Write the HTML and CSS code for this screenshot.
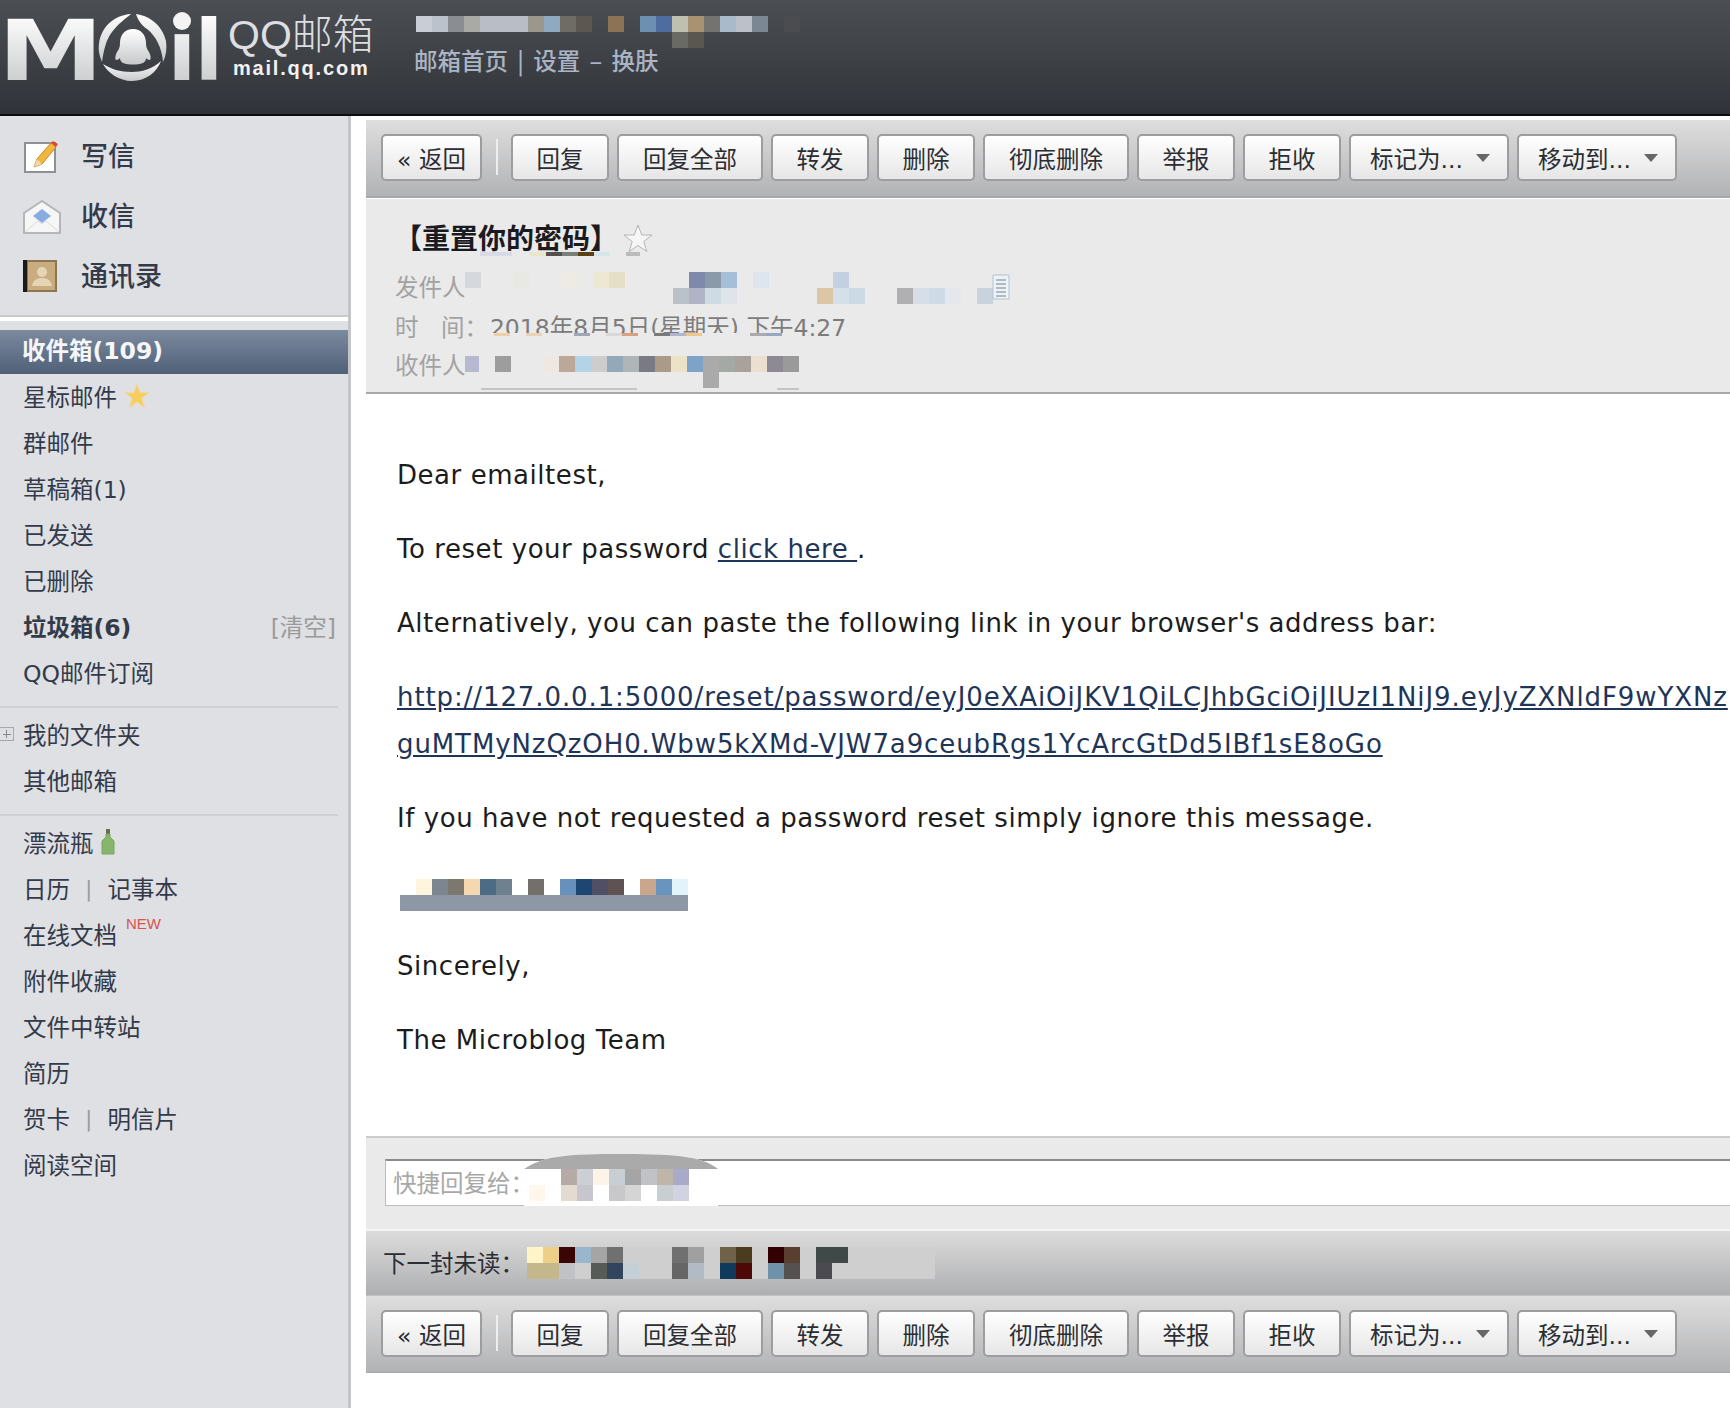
FILE: index.html
```html
<!DOCTYPE html>
<html lang="zh-CN">
<head>
    <meta charset="UTF-8">
    <title>QQ邮箱</title>
    <link rel="stylesheet" href="styles.css">
</head>
<body>

    <header class="topbar">
        <div class="logo">
            <span class="logo-letter logo-m">M</span>
            <svg class="logo-o" width="70" height="68" viewBox="0 0 70 68">
                <defs>
                    <linearGradient id="logoFill" x1="0" y1="0" x2="0" y2="1">
                        <stop offset="0" stop-color="#ffffff"/>
                        <stop offset="1" stop-color="#c6c8ca"/>
                    </linearGradient>
                </defs>
                <path d="M33 1C16 2 3 14 1 31c-1 7 1 13 3 18 2-13 4-22 10-30C20 11 27 6 33 1z" fill="url(#logoFill)"/>
                <path d="M38 1c15 2 27 13 30 27 1 8 0 15-3 21-1-14-7-26-16-33-6-4-9-9-11-15z" fill="url(#logoFill)"/>
                <path d="M5 51c8 5 17 8 29 8 9 0 21-3 29-11-4 11-15 20-29 20-13 0-24-8-29-17z" fill="url(#logoFill)"/>
                <path d="M35 16c8 0 13 6 13 14 0 4 1 6 3 9 2 4 2 7 1 8-2 0-3-1-4-2 0 2-1 4-3 5-6 2-14 2-20 0-2-1-3-3-3-5-1 1-2 2-4 2-1-1-1-4 1-8 2-3 3-5 3-9 0-8 5-14 13-14z" fill="url(#logoFill)"/>
            </svg>
            <span class="logo-letter logo-i">ı</span>
            <span class="logo-letter logo-l">l</span>
        </div>
        <div class="brand">
            <div class="brand-name">QQ邮箱</div>
            <div class="brand-url">mail.qq.com</div>
        </div>
        <div class="account">
            <svg class="mosaic account-mosaic" width="384" height="32" viewBox="0 0 384 32">
                <rect x="0" width="16" height="16" fill="#c9ced6"/>
                <rect x="16" width="16" height="16" fill="#bcc2cb"/>
                <rect x="32" width="16" height="16" fill="#8a8e93"/>
                <rect x="48" width="16" height="16" fill="#a9a9a5"/>
                <rect x="64" width="48" height="16" fill="#b9bec6"/>
                <rect x="112" width="16" height="16" fill="#9c978c"/>
                <rect x="128" width="16" height="16" fill="#8fa9c0"/>
                <rect x="144" width="16" height="16" fill="#6f6c66"/>
                <rect x="160" width="16" height="16" fill="#5c5750"/>
                <rect x="192" width="16" height="16" fill="#8d7355"/>
                <rect x="224" width="16" height="16" fill="#6d8fb2"/>
                <rect x="240" width="16" height="16" fill="#4f6ca0"/>
                <rect x="256" width="16" height="16" fill="#c0c0b0"/>
                <rect x="272" width="16" height="16" fill="#a89272"/>
                <rect x="288" width="16" height="16" fill="#74736f"/>
                <rect x="304" width="16" height="16" fill="#a9bacb"/>
                <rect x="320" width="16" height="16" fill="#bcc0c8"/>
                <rect x="336" width="16" height="16" fill="#7b8894"/>
                <rect x="368" width="16" height="16" fill="#4a4c50"/>
                <rect x="256" y="16" width="16" height="16" fill="#6a6a64"/>
                <rect x="272" y="16" width="16" height="16" fill="#5a5650"/>
            </svg>
            <div class="account-links">邮箱首页 | 设置 – 换肤</div>
        </div>
    </header>

    <div class="layout">
        <aside class="sidebar">
            <nav class="quick-nav">
                <a class="quick-item">
                    <svg class="quick-icon" width="36" height="34" viewBox="0 0 36 34">
                        <rect x="2" y="3" width="30" height="29" fill="#ffffff" stroke="#8f9092" stroke-width="2"/>
                        <path d="M11 27l3-8L28 3l5 4-14 17z" fill="#f2b63c" stroke="#c8872a"/>
                        <path d="M28 3l2-2 5 3-2 3z" fill="#d9483a"/>
                        <path d="M11 27l3-8 5 5z" fill="#f0d6a8"/>
                    </svg>
                    写信
                </a>
                <a class="quick-item">
                    <svg class="quick-icon" width="38" height="34" viewBox="0 0 38 34">
                        <path d="M1 13L19 1l18 12v20H1z" fill="#f6f6f7" stroke="#b4b6ba" stroke-width="2"/>
                        <path d="M19 9l9 7-9 7-9-7z" fill="#8aabdf"/>
                        <path d="M2 32l13-11 4 3 4-3 13 11" fill="none" stroke="#d8dade"/>
                    </svg>
                    收信
                </a>
                <a class="quick-item">
                    <svg class="quick-icon" width="34" height="32" viewBox="0 0 34 32">
                        <rect x="0" y="0" width="34" height="32" fill="#8e7650"/>
                        <rect x="0" y="0" width="4" height="32" fill="#1c1a16"/>
                        <rect x="5" y="2" width="27" height="28" fill="#c9ad80"/>
                        <circle cx="19" cy="12" r="5" fill="#e6d5b4"/>
                        <path d="M9 26c1-6 5-8 10-8s9 2 10 8z" fill="#e6d5b4"/>
                    </svg>
                    通讯录
                </a>
            </nav>
            <div class="folder-selected">收件箱(109)</div>
            <ul class="folders">
                <li>星标邮件
                    <svg class="row-icon" width="26" height="26" viewBox="0 0 24 24">
                        <path d="M12 1l3 8h8l-6.500 5 2.500 9-7-5.500L5 23l2.500-9L1 9h8z" fill="#f7cd5c" stroke="#ecd9a8"/>
                    </svg>
                </li>
                <li>群邮件</li>
                <li>草稿箱(1)</li>
                <li>已发送</li>
                <li>已删除</li>
                <li class="folder-strong">垃圾箱(6)<span class="clear-link">[清空]</span></li>
                <li>QQ邮件订阅</li>
            </ul>
            <ul class="folders folders-split">
                <li class="has-tree"><span class="tree-plus"></span>我的文件夹</li>
                <li>其他邮箱</li>
            </ul>
            <ul class="folders folders-split">
                <li>漂流瓶
                    <svg class="row-icon" width="14" height="26" viewBox="0 0 14 26">
                        <rect x="5" y="0" width="4" height="6" fill="#6d6a4e"/>
                        <path d="M5 5h4l0 3 4 4v13H1V12l4-4z" fill="#86b56c" stroke="#7ba563"/>
                    </svg>
                </li>
                <li>日历<span class="pipe">|</span>记事本</li>
                <li>在线文档<sup class="new-tag">NEW</sup></li>
                <li>附件收藏</li>
                <li>文件中转站</li>
                <li>简历</li>
                <li>贺卡<span class="pipe">|</span>明信片</li>
                <li>阅读空间</li>
            </ul>
        </aside>

        <main class="content">
            <div class="toolbar">
                <button class="btn btn-back">« 返回</button>
                <span class="toolbar-sep"></span>
                <button class="btn btn-sm">回复</button>
                <button class="btn btn-md">回复全部</button>
                <button class="btn btn-sm">转发</button>
                <button class="btn btn-sm">删除</button>
                <button class="btn btn-md">彻底删除</button>
                <button class="btn btn-sm">举报</button>
                <button class="btn btn-sm">拒收</button>
                <button class="btn btn-lg">标记为...<span class="caret"></span></button>
                <button class="btn btn-lg">移动到...<span class="caret"></span></button>
            </div>

            <section class="msg-head">
                <div class="subject">
                    <h2>【重置你的密码】</h2>
                    <svg class="subject-star" width="32" height="30" viewBox="0 0 32 30">
                        <path d="M16 2l3.800 10H30l-8.200 6.500 3 10L16 22.500 7.200 28.500l3-10L2 12h10.200z" fill="#f6f6f6" stroke="#b5b5b5"/>
                    </svg>
                    <svg class="subject-smudge" width="160" height="4" viewBox="0 0 160 4">
                        <rect x="0" width="32" height="4" fill="#d8dbe6"/>
                        <rect x="50" width="16" height="4" fill="#e9e6cc"/>
                        <rect x="66" width="16" height="4" fill="#56504c"/>
                        <rect x="82" width="16" height="4" fill="#7b7f7c"/>
                        <rect x="98" width="16" height="4" fill="#5b4114"/>
                        <rect x="114" width="16" height="4" fill="#d4e6ec"/>
                        <rect x="146" width="14" height="4" fill="#bcbcbc"/>
                    </svg>
                </div>
                <div class="meta-row">
                    <span class="meta-label">发件人</span>
                    <svg class="mosaic" width="528" height="32" viewBox="0 0 528 32">
                        <rect x="0" width="16" height="16" fill="#d5d9dd"/>
                        <rect x="48" width="16" height="16" fill="#e9e9e4"/>
                        <rect x="96" width="16" height="16" fill="#eeebe4"/>
                        <rect x="128" width="16" height="16" fill="#ece8d4"/>
                        <rect x="144" width="16" height="16" fill="#e5dfc8"/>
                        <rect x="224" width="16" height="16" fill="#7f8aab"/>
                        <rect x="240" width="16" height="16" fill="#8b9aa8"/>
                        <rect x="256" width="16" height="16" fill="#a6bfd8"/>
                        <rect x="288" width="16" height="16" fill="#dde6ee"/>
                        <rect x="368" width="16" height="16" fill="#c3d0df"/>
                        <rect x="208" y="16" width="16" height="16" fill="#b9c1c9"/>
                        <rect x="224" y="16" width="16" height="16" fill="#b0b4c6"/>
                        <rect x="240" y="16" width="16" height="16" fill="#cfdbe4"/>
                        <rect x="256" y="16" width="16" height="16" fill="#dfe4ea"/>
                        <rect x="352" y="16" width="16" height="16" fill="#dcc6a4"/>
                        <rect x="368" y="16" width="16" height="16" fill="#d5dfe8"/>
                        <rect x="384" y="16" width="16" height="16" fill="#ccdae5"/>
                        <rect x="432" y="16" width="16" height="16" fill="#b0b0b2"/>
                        <rect x="448" y="16" width="16" height="16" fill="#d6dfe8"/>
                        <rect x="464" y="16" width="16" height="16" fill="#cedae5"/>
                        <rect x="480" y="16" width="16" height="16" fill="#e4e7ec"/>
                        <rect x="512" y="16" width="16" height="16" fill="#c9d3dd"/>
                    </svg>
                    <svg class="note-icon" width="18" height="26" viewBox="0 0 18 26">
                        <path d="M1 1h16v24H1z" fill="#eef1f5" stroke="#b4c2d2"/>
                        <path d="M4 6h10M4 10h10M4 14h10M4 18h10M4 22h10" stroke="#9aa8b8" stroke-width="1.500"/>
                    </svg>
                </div>
                <div class="meta-row">
                    <span class="meta-label">时&nbsp;&nbsp;&nbsp;间：</span><span class="meta-time">2018年8月5日(星期天) 下午4:27</span>
                    <svg class="time-smudge" width="310" height="14" viewBox="0 0 310 14">
                        <rect width="310" height="14" fill="#eaeaea"/>
                        <rect x="6" y="0" width="16" height="3" fill="#eecfa8"/>
                        <rect x="38" y="0" width="16" height="3" fill="#ecd3b6"/>
                        <rect x="86" y="0" width="16" height="3" fill="#9da6b2"/>
                        <rect x="118" y="0" width="16" height="3" fill="#d9d9d9"/>
                        <rect x="134" y="0" width="16" height="3" fill="#d9a27c"/>
                        <rect x="166" y="0" width="16" height="3" fill="#7a7a7a"/>
                        <rect x="182" y="0" width="16" height="3" fill="#aeb5cc"/>
                        <rect x="198" y="0" width="16" height="3" fill="#efc68c"/>
                        <rect x="262" y="0" width="16" height="3" fill="#ababab"/>
                        <rect x="278" y="0" width="16" height="3" fill="#9aa6c2"/>
                    </svg>
                </div>
                <div class="meta-row meta-row-to">
                    <span class="meta-label">收件人</span>
                    <svg class="mosaic" width="336" height="38" viewBox="0 0 336 38">
                        <rect x="2" width="14" height="16" fill="#b6b9cf"/>
                        <rect x="32" width="16" height="16" fill="#9d9d9d"/>
                        <rect x="80" width="16" height="16" fill="#efe8e2"/>
                        <rect x="96" width="16" height="16" fill="#bca898"/>
                        <rect x="112" width="16" height="16" fill="#b5d3e8"/>
                        <rect x="128" width="16" height="16" fill="#cdcdcd"/>
                        <rect x="144" width="16" height="16" fill="#93a9ba"/>
                        <rect x="160" width="16" height="16" fill="#b0b6b8"/>
                        <rect x="176" width="16" height="16" fill="#7a7a85"/>
                        <rect x="192" width="16" height="16" fill="#aa9b88"/>
                        <rect x="208" width="16" height="16" fill="#ece2c8"/>
                        <rect x="224" width="16" height="16" fill="#7ea3c9"/>
                        <rect x="240" width="16" height="32" fill="#aaaaaa"/>
                        <rect x="256" width="16" height="16" fill="#a5a9a5"/>
                        <rect x="272" width="16" height="16" fill="#a9a29c"/>
                        <rect x="288" width="16" height="16" fill="#ebe0d0"/>
                        <rect x="304" width="16" height="16" fill="#8d8a94"/>
                        <rect x="320" width="16" height="16" fill="#9a9a9a"/>
                        <rect x="18" y="32" width="156" height="2" fill="#c4c4c4"/>
                        <rect x="314" y="32" width="22" height="2" fill="#c4c4c4"/>
                    </svg>
                </div>
            </section>

            <article class="msg-body">
                <p>Dear emailtest,</p>
                <p>To reset your password <a href="#">click here </a>.</p>
                <p>Alternatively, you can paste the following link in your browser's address bar:</p>
                <p class="reset-url"><a href="#">http://127.0.0.1:5000/reset/password/eyJ0eXAiOiJKV1QiLCJhbGciOiJIUzI1NiJ9.eyJyZXNldF9wYXNz</a><br><a href="#">guMTMyNzQzOH0.Wbw5kXMd-VJW7a9ceubRgs1YcArcGtDd5IBf1sE8oGo</a></p>
                <p>If you have not requested a password reset simply ignore this message.</p>
                <p class="signature-row">
                    <svg class="mosaic" width="288" height="32" viewBox="0 0 288 32">
                        <rect x="16" width="16" height="16" fill="#fff4de"/>
                        <rect x="32" width="16" height="16" fill="#7d8690"/>
                        <rect x="48" width="16" height="16" fill="#7c7870"/>
                        <rect x="64" width="16" height="16" fill="#f5d8b0"/>
                        <rect x="80" width="16" height="16" fill="#4e6b86"/>
                        <rect x="96" width="16" height="16" fill="#6f808f"/>
                        <rect x="128" width="16" height="16" fill="#736f6a"/>
                        <rect x="160" width="16" height="16" fill="#6790ba"/>
                        <rect x="176" width="16" height="16" fill="#1e4672"/>
                        <rect x="192" width="16" height="16" fill="#504f66"/>
                        <rect x="208" width="16" height="16" fill="#5e5252"/>
                        <rect x="240" width="16" height="16" fill="#c9a68c"/>
                        <rect x="256" width="16" height="16" fill="#6994bd"/>
                        <rect x="272" width="16" height="16" fill="#e2f3fb"/>
                        <rect x="0" y="16" width="288" height="16" fill="#8d97a6"/>
                    </svg>
                </p>
                <p>Sincerely,</p>
                <p>The Microblog Team</p>
            </article>

            <section class="quick-reply">
                <div class="reply-input">
                    <span class="reply-label">快捷回复给：</span>
                    <svg class="reply-mosaic" width="194" height="52" viewBox="0 0 194 52">
                        <path d="M0 15C20 2 40 0 100 0s80 4 94 15v37H0z" fill="#ffffff"/>
                        <path d="M0 15C20 2 40 0 100 0s80 4 94 15z" fill="#aaaaaa"/>
                        <rect x="37" y="15" width="16" height="16" fill="#b5aaa5"/>
                        <rect x="53" y="15" width="16" height="16" fill="#ccd0d4"/>
                        <rect x="69" y="15" width="16" height="16" fill="#fdf3e8"/>
                        <rect x="85" y="15" width="16" height="16" fill="#c8cfd4"/>
                        <rect x="101" y="15" width="16" height="16" fill="#a5a5a5"/>
                        <rect x="117" y="15" width="16" height="16" fill="#c0c2c6"/>
                        <rect x="133" y="15" width="16" height="16" fill="#bfb5a8"/>
                        <rect x="149" y="15" width="16" height="16" fill="#a8aac8"/>
                        <rect x="5" y="31" width="16" height="16" fill="#fff6ec"/>
                        <rect x="37" y="31" width="16" height="16" fill="#e4dbd0"/>
                        <rect x="53" y="31" width="16" height="16" fill="#c6c6cc"/>
                        <rect x="85" y="31" width="16" height="16" fill="#c8c8ca"/>
                        <rect x="101" y="31" width="16" height="16" fill="#d5d5d5"/>
                        <rect x="133" y="31" width="16" height="16" fill="#c9ced3"/>
                        <rect x="149" y="31" width="16" height="16" fill="#d2d3e2"/>
                    </svg>
                </div>
            </section>

            <div class="next-unread">
                <span class="next-label">下一封未读：</span>
                <svg class="mosaic" width="408" height="32" viewBox="0 0 408 32">
                    <rect x="0" width="408" height="32" fill="#cfcfcf"/>
                    <rect x="0" width="16" height="16" fill="#fff3c8"/>
                    <rect x="16" width="16" height="16" fill="#eecf88"/>
                    <rect x="32" width="16" height="16" fill="#3a0505"/>
                    <rect x="48" width="16" height="16" fill="#9ab6cc"/>
                    <rect x="64" width="16" height="16" fill="#a5a5a5"/>
                    <rect x="80" width="16" height="16" fill="#707070"/>
                    <rect x="145" width="16" height="16" fill="#707070"/>
                    <rect x="161" width="16" height="16" fill="#a0a0a0"/>
                    <rect x="193" width="16" height="16" fill="#6f6248"/>
                    <rect x="209" width="16" height="16" fill="#4b3c20"/>
                    <rect x="241" width="16" height="16" fill="#330000"/>
                    <rect x="257" width="16" height="16" fill="#5a3e30"/>
                    <rect x="289" width="32" height="16" fill="#3f4a48"/>
                    <rect x="0" y="16" width="32" height="16" fill="#c4b78c"/>
                    <rect x="32" y="16" width="16" height="16" fill="#c0c2c6"/>
                    <rect x="64" y="16" width="16" height="16" fill="#575b58"/>
                    <rect x="80" y="16" width="16" height="16" fill="#33455e"/>
                    <rect x="96" y="16" width="16" height="16" fill="#c4cfd6"/>
                    <rect x="145" y="16" width="16" height="16" fill="#666666"/>
                    <rect x="161" y="16" width="16" height="16" fill="#b2bac6"/>
                    <rect x="193" y="16" width="16" height="16" fill="#103a5c"/>
                    <rect x="209" y="16" width="16" height="16" fill="#4d0808"/>
                    <rect x="241" y="16" width="16" height="16" fill="#6f92aa"/>
                    <rect x="257" y="16" width="16" height="16" fill="#555150"/>
                    <rect x="289" y="16" width="16" height="16" fill="#4a4a50"/>
                </svg>
            </div>

            <div class="toolbar toolbar-bottom">
                <button class="btn btn-back">« 返回</button>
                <span class="toolbar-sep"></span>
                <button class="btn btn-sm">回复</button>
                <button class="btn btn-md">回复全部</button>
                <button class="btn btn-sm">转发</button>
                <button class="btn btn-sm">删除</button>
                <button class="btn btn-md">彻底删除</button>
                <button class="btn btn-sm">举报</button>
                <button class="btn btn-sm">拒收</button>
                <button class="btn btn-lg">标记为...<span class="caret"></span></button>
                <button class="btn btn-lg">移动到...<span class="caret"></span></button>
            </div>
        </main>
    </div>

</body>
</html>
```

FILE: styles.css
```css
* {
    box-sizing: border-box;
}
html, body {
    height: 100%;
}
body {
    margin: 0;
    height: 1408px;
    overflow: hidden;
    background-color: #ffffff;
    color: #2d3340;
    font-family: "DejaVu Sans", "Noto Sans CJK SC", sans-serif;
    font-size: 23.5px;
    display: flex;
    flex-direction: column;
}
ul {
    list-style: none;
    margin: 0;
    padding: 0;
}
.mosaic {
    display: block;
    flex: none;
    shape-rendering: crispEdges;
}

/* top bar */
.topbar {
    flex: none;
    height: 116px;
    display: flex;
    background: linear-gradient(#4b4e53, #3b3e43 60%, #2f3238);
    border-bottom: 2px solid #0c0c0e;
}
.logo {
    display: flex;
    align-items: flex-start;
    width: 228px;
    padding: 12px 0 0 0;
}
.logo-letter {
    font-family: "DejaVu Sans", sans-serif;
    font-weight: bold;
    font-size: 84px;
    line-height: 78px;
    background: linear-gradient(#ffffff, #c6c8ca);
    -webkit-background-clip: text;
    background-clip: text;
    color: transparent;
}
.logo-m {
    transform: scaleX(1.26);
    transform-origin: 0 0;
    margin-left: -2px;
    margin-right: 16px;
}
.logo-o {
    flex: none;
    margin: 1px 0 0 0;
}
.logo-i {
    position: relative;
    margin-left: 0;
}
.logo-i::before {
    content: "";
    position: absolute;
    left: 5px;
    top: 0;
    width: 18px;
    height: 18px;
    border-radius: 50%;
    background-color: #f4f4f5;
}
.logo-l {
    margin-left: -2px;
}
.brand {
    width: 186px;
    color: #dcdee0;
}
.brand-name {
    font-family: "Liberation Sans", "Noto Sans CJK SC", sans-serif;
    font-size: 41px;
    line-height: 40px;
    margin-top: 15px;
    font-weight: 300;
}
.brand-url {
    font-family: "Liberation Sans", sans-serif;
    font-weight: bold;
    font-size: 20px;
    line-height: 24px;
    letter-spacing: 1.8px;
    margin: 1px 0 0 5px;
    color: #f2f2f2;
}
.account {
    position: relative;
    padding: 16px 0 0 2px;
}
.account-links {
    position: absolute;
    left: 0;
    top: 42px;
    white-space: nowrap;
    color: #aab4c4;
    font-family: "Noto Sans CJK SC", sans-serif;
    font-weight: 500;
    line-height: 36px;
    word-spacing: 4px;
}

/* layout */
.layout {
    flex: 1;
    display: flex;
    min-height: 0;
}
.sidebar {
    flex: none;
    width: 351px;
    padding-top: 11px;
    background-color: #dfe0e3;
    border-right: 3px solid #c4c5c8;
    color: #333a4a;
}
.quick-nav {
    height: 194px;
    padding-bottom: 10px;
    border-bottom: 4px solid #ffffff;
    box-shadow: inset 0 -2px 0 #c8c9cc;
    margin-bottom: 9px;
}
.quick-item {
    position: relative;
    display: flex;
    align-items: center;
    height: 60px;
    padding: 0 0 5px 81px;
    font-size: 27px;
    font-weight: 500;
}
.quick-icon {
    position: absolute;
    left: 23px;
    top: 13px;
}
.folder-selected {
    height: 44px;
    line-height: 43px;
    padding-left: 22px;
    color: #f5f6f8;
    font-weight: bold;
    background: linear-gradient(#7c8a9e, #4f6078);
}
.folders li {
    display: flex;
    align-items: center;
    height: 46px;
    padding: 0 0 2px 23px;
}
.folders-split {
    position: relative;
    margin-top: 10px;
    padding-top: 6px;
}
.folders-split::before {
    content: "";
    position: absolute;
    left: 0;
    right: 10px;
    top: 0;
    border-top: 2px solid #cfd0d3;
}
.folder-strong {
    font-weight: bold;
}
.clear-link {
    margin-left: auto;
    margin-right: 12px;
    color: #9a9a9a;
    font-weight: normal;
}
.row-icon {
    margin-left: 7px;
}
.tree-plus {
    position: absolute;
    left: 0;
    width: 14px;
    height: 14px;
    background:
        linear-gradient(#888, #888) center / 8px 1px no-repeat,
        linear-gradient(#888, #888) center / 1px 8px no-repeat;
    border: 1px solid #a8a8a8;
    border-left: none;
}
.pipe {
    margin: 0 15px;
    color: #9c9c9c;
    font-size: 22px;
}
.new-tag {
    align-self: flex-start;
    margin: 5px 0 0 9px;
    font-family: "Liberation Sans", sans-serif;
    font-size: 15px;
    line-height: 14px;
    color: #d9534f;
}

/* content */
.content {
    flex: 1;
    min-width: 0;
    padding: 4px 0 35px 15px;
    display: flex;
    flex-direction: column;
    overflow: hidden;
}
.toolbar {
    flex: none;
    display: flex;
    align-items: flex-start;
    gap: 8px;
    height: 79px;
    padding: 14px 0 0 15px;
    background: linear-gradient(#dedede, #b1b2b4) 0 0 / 100% 77px no-repeat;
    border-bottom: 1px solid #ffffff;
    box-shadow: inset 0 -2px 0 #a6a7a9;
}
.toolbar-bottom {
    height: 77px;
    border-bottom: none;
    box-shadow: inset 0 -1px 0 #a6a7a9;
}
.btn {
    flex: none;
    height: 47px;
    padding: 0;
    font: inherit;
    color: #2b2d33;
    background: linear-gradient(#ffffff, #e6e6e6);
    border: 2px solid #9d9d9f;
    border-radius: 5px;
}
.btn-back {
    width: 101px;
}
.btn-sm {
    width: 98px;
}
.btn-md {
    width: 146px;
}
.btn-lg {
    width: 160px;
    display: flex;
    align-items: center;
    padding-left: 19px;
}
.caret {
    margin-left: 13px;
    border-left: 7px solid transparent;
    border-right: 7px solid transparent;
    border-top: 8px solid #666;
}
.toolbar-sep {
    flex: none;
    width: 2px;
    height: 36px;
    margin: 5px 5px 0 6px;
    background-color: #eeeeee;
}

/* message head */
.msg-head {
    flex: none;
    height: 195px;
    padding: 19px 0 0 29px;
    background-color: #eaeaea;
    border-bottom: 2px solid #a8a8a8;
}
.subject {
    position: relative;
    display: flex;
    align-items: center;
    height: 40px;
    margin-bottom: 10px;
}
.subject h2 {
    margin: 4px 0 0 -1px;
    font-size: 28px;
    line-height: 40px;
    font-weight: bold;
    color: #1b1b1f;
}
.subject-star {
    margin-left: 4px;
}
.subject-smudge {
    position: absolute;
    left: 85px;
    top: 34px;
}
.meta-row {
    position: relative;
    display: flex;
    align-items: center;
    height: 40px;
    padding-bottom: 4px;
    color: #a2a2a2;
}
.meta-row-to {
    height: 36px;
}
.meta-row-to .mosaic {
    position: absolute;
    left: 69px;
    top: 4px;
}
.meta-label {
    flex: none;
}
.meta-row .mosaic {
    margin-left: -1px;
    align-self: flex-start;
    margin-top: 4px;
}
.note-icon {
    position: absolute;
    left: 597px;
    top: 6px;
}
.meta-time {
    margin-left: 2px;
    color: #7c7c7c;
    white-space: nowrap;
}
.time-smudge {
    position: absolute;
    left: 93px;
    top: 25px;
}

/* message body */
.msg-body {
    flex: 1;
    padding: 58px 0 0 31px;
    white-space: nowrap;
    color: #1c1c1c;
    font-family: "DejaVu Sans", "Liberation Sans", sans-serif;
    font-size: 26px;
    letter-spacing: 0.55px;
    line-height: 47px;
}
.msg-body p {
    margin: 0 0 27px;
}
.msg-body a {
    color: #1f3558;
    text-decoration: underline;
}
.reset-url {
    letter-spacing: 0.9px;
}
.signature-row {
    height: 47px;
    padding: 10px 0 0 3px;
}

/* quick reply */
.quick-reply {
    flex: none;
    height: 93px;
    padding: 21px 0 0 19px;
    background-color: #eaeaea;
    border-top: 2px solid #cccccc;
}
.reply-input {
    position: relative;
    height: 47px;
    line-height: 46px;
    padding-left: 7px;
    background-color: #ffffff;
    border: 1px solid #bdbdbd;
    border-top: 2px solid #8c8c8c;
    border-right: none;
}
.reply-label {
    color: #a8a8a8;
}
.reply-mosaic {
    position: absolute;
    left: 138px;
    top: -7px;
}

.next-unread {
    flex: none;
    display: flex;
    align-items: center;
    height: 67px;
    padding-left: 17px;
    border-top: 2px solid #f5f5f5;
    background: linear-gradient(#dcdcdc, #aeafb1);
    color: #2b2d33;
    border-bottom: 1px solid #c2c2c2;
}
.next-label {
    width: 144px;
    margin-top: -2px;
    white-space: nowrap;
}
```
